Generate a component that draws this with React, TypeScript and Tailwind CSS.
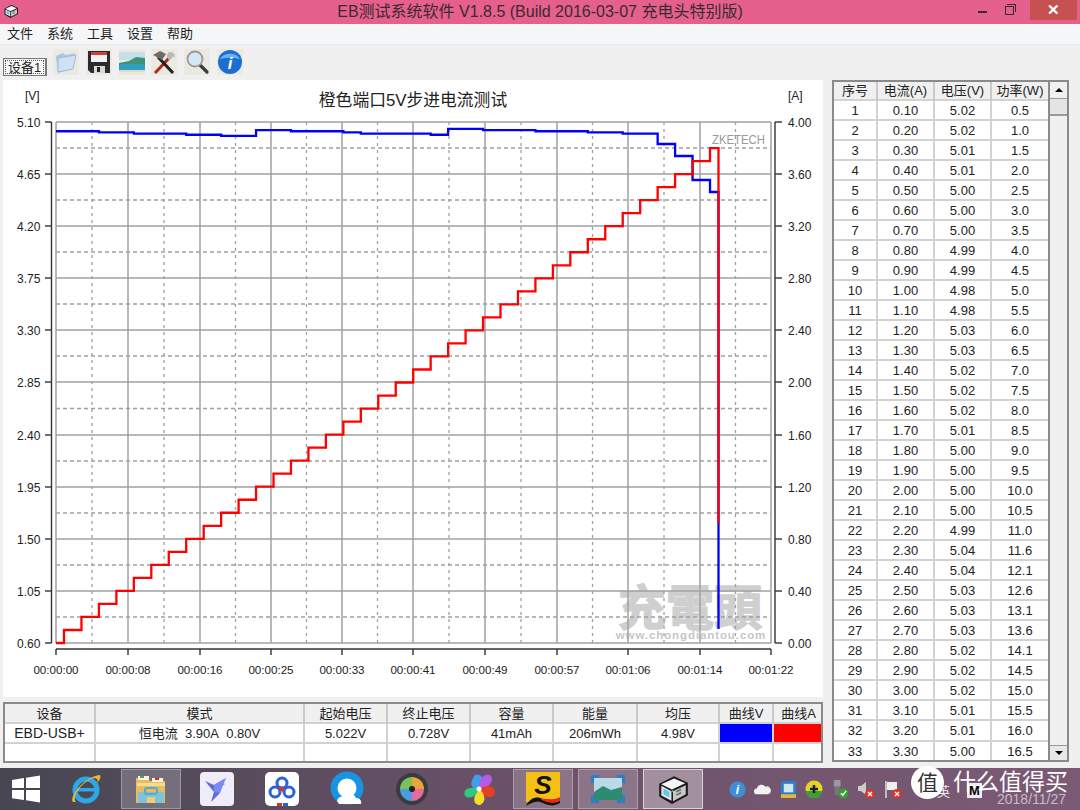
const menus = ["文件", "系统", "工具", "设置", "帮助"];

const volts = [5.02, 5.02, 5.01, 5.01, 5.0, 5.0, 5.0, 4.99, 4.99, 4.98, 4.98, 5.03, 5.03, 5.02, 5.02, 5.02, 5.01, 5.0, 5.0, 5.0, 5.0, 4.99, 5.04, 5.04, 5.03, 5.03, 5.03, 5.02, 5.02, 5.02, 5.01, 5.01, 5.0, 5.0];
const power = ["0.5", "1.0", "1.5", "2.0", "2.5", "3.0", "3.5", "4.0", "4.5", "5.0", "5.5", "6.0", "6.5", "7.0", "7.5", "8.0", "8.5", "9.0", "9.5", "10.0", "10.5", "11.0", "11.6", "12.1", "12.6", "13.1", "13.6", "14.1", "14.5", "15.0", "15.5", "16.0", "16.5"];

const gridX = [56, 128, 200, 271, 342, 413, 485, 557, 628, 700, 771];
const gridY = [122, 174, 226, 278, 330, 382, 435, 487, 539, 591, 643];
const timeLabels = ["00:00:00", "00:00:08", "00:00:16", "00:00:25", "00:00:33", "00:00:41", "00:00:49", "00:00:57", "00:01:06", "00:01:14", "00:01:22"];
const leftLabels = ["5.10", "4.65", "4.20", "3.75", "3.30", "2.85", "2.40", "1.95", "1.50", "1.05", "0.60"];
const rightLabels = ["4.00", "3.60", "3.20", "2.80", "2.40", "2.00", "1.60", "1.20", "0.80", "0.40", "0.00"];

const stepX = (i: number) => 64 + i * 17.46;

function redPoints() {
  const pts = ["56,643", "64,643"];
  for (let i = 0; i < 38; i++) {
    const y = 643 - (i + 1) * 13.025;
    pts.push(`${stepX(i)},${y}`, `${i === 37 ? 718.5 : stepX(i + 1)},${y}`);
  }
  pts.push("718.5,523");
  return pts.join(" ");
}

function bluePoints() {
  const ys = volts.map((v) => 122 + (5.1 - v) * 115.8).concat([144, 156, 180, 192]);
  const pts = [`56,${ys[0]}`];
  ys.forEach((y, i) => {
    pts.push(`${stepX(i)},${y}`, `${i === ys.length - 1 ? 718.5 : stepX(i + 1)},${y}`);
  });
  pts.push("718.5,629");
  return pts.join(" ");
}

function Chart() {
  return (
    <svg viewBox="3 80 820 617" className="w-[820px] h-[617px] block">
      {/* watermark sits under the grid */}
      <text x="690" y="625" textAnchor="middle" fontSize="48" fontWeight="700" fill="#cfcfcf" stroke="#cfcfcf" strokeWidth="1.5">充電頭</text>
      <text x="691" y="639" textAnchor="middle" fontSize="11.5" fontWeight="700" letterSpacing="0.9" fill="#c6c6c6">www.chongdiantou.com</text>

      <text x="413" y="106" textAnchor="middle" fontSize="16.8" fill="#222">橙色端口5V步进电流测试</text>
      <text x="25" y="100" fontSize="12" fill="#222">[V]</text>
      <text x="788" y="100" fontSize="12" fill="#222">[A]</text>

      {/* grid */}
      {gridX.map((x, i) => (
        <g key={x}>
          <line x1={x} y1="122" x2={x} y2="643" stroke="#a0a0a0" strokeWidth="1.5" />
          {i < 10 && <line x1={(x + gridX[i + 1]) / 2} y1="122" x2={(x + gridX[i + 1]) / 2} y2="643" stroke="#a0a0a0" strokeWidth="1.3" strokeDasharray="3 4" />}
        </g>
      ))}
      {gridY.map((y, i) => (
        <g key={y}>
          <line x1="56" y1={y} x2="771" y2={y} stroke="#a0a0a0" strokeWidth="1.5" />
          {i < 10 && <line x1="56" y1={(y + gridY[i + 1]) / 2} x2="771" y2={(y + gridY[i + 1]) / 2} stroke="#a0a0a0" strokeWidth="1.3" strokeDasharray="4 3" />}
        </g>
      ))}

      <text x="712" y="144" fontSize="12.5" textLength="53" lengthAdjust="spacingAndGlyphs" fill="#999">ZKETECH</text>

      {/* axes */}
      <path d="M51.5 122V643M775 122V643M56 649H771" stroke="#333" strokeWidth="1.4" fill="none" />
      {gridY.map((y, i) => (
        <g key={y}>
          <line x1="45" y1={y} x2="51.5" y2={y} stroke="#333" strokeWidth="1.4" />
          <line x1="775" y1={y} x2="782" y2={y} stroke="#333" strokeWidth="1.4" />
          <text x="17" y={y + 4.5} fontSize="12" fill="#222">{leftLabels[i]}</text>
          <text x="788" y={y + 4.5} fontSize="12" fill="#222">{rightLabels[i]}</text>
        </g>
      ))}
      {gridX.map((x, i) => (
        <g key={x}>
          <line x1={x} y1="649" x2={x} y2="655" stroke="#333" strokeWidth="1.4" />
          <text x={x} y="674" textAnchor="middle" fontSize="11.6" fill="#222">{timeLabels[i]}</text>
        </g>
      ))}

      {/* curves */}
      <polyline points={bluePoints()} fill="none" stroke="#0000ff" strokeWidth="2.3" />
      <polyline points={redPoints()} fill="none" stroke="#ff0000" strokeWidth="2.3" />
    </svg>
  );
}

function DataTable() {
  const th = "border-r-2 border-[#c9c9c9] bg-[#f0f0f0] font-normal last:border-r-0";
  const td = "border-r-2 border-t-2 border-[#d2d2d2] last:border-r-0";
  return (
    <div className="flex w-[237px] h-[682px] border-2 border-[#8a8a8a] bg-white overflow-hidden">
      <table className="w-[214px] table-fixed border-collapse text-[13px] leading-none text-center text-[#222] self-start">
        <colgroup>
          <col className="w-[43px]" />
          <col className="w-[57px]" />
          <col className="w-[57px]" />
          <col className="w-[57px]" />
        </colgroup>
        <thead>
          <tr className="h-[18px]">
            <th className={th}>序号</th>
            <th className={th}>电流(A)</th>
            <th className={th}>电压(V)</th>
            <th className={th}>功率(W)</th>
          </tr>
        </thead>
        <tbody>
          {power.map((p, i) => (
            <tr key={i} className="h-[20.03px]">
              <td className={td}>{i + 1}</td>
              <td className={td}>{((i + 1) / 10).toFixed(2)}</td>
              <td className={td}>{volts[i].toFixed(2)}</td>
              <td className={td}>{p}</td>
            </tr>
          ))}
        </tbody>
      </table>
      {/* scrollbar */}
      <div className="ml-auto w-[19px] flex flex-col bg-[#f0f0f0] border-l-2 border-[#8a8a8a]">
        <div className="h-[17px] flex items-center justify-center bg-[#f0f0f0] border-b border-[#999]">
          <div className="w-0 h-0 border-x-[4px] border-x-transparent border-b-[4px] border-b-black" />
        </div>
        <div className="h-[17px] bg-[#e4e4e4] border-b-2 border-[#9a9a9a]" />
        <div className="flex-1" />
        <div className="h-[15px] flex items-center justify-center bg-[#e8e8e8] border-t border-[#999]">
          <div className="w-0 h-0 border-x-[4px] border-x-transparent border-t-[4px] border-t-black" />
        </div>
      </div>
    </div>
  );
}

function SummaryTable() {
  const th = "border-r-2 border-[#c9c9c9] bg-[#f0f0f0] font-normal last:border-r-0";
  const td = "border-r-2 border-t-2 border-[#d2d2d2] last:border-r-0";
  return (
    <div className="w-[820px] h-[61px] border-2 border-[#8a8a8a] bg-white overflow-hidden">
      <table className="w-full table-fixed border-collapse text-[13px] leading-none text-center text-[#222]">
        <colgroup>
          <col className="w-[90px]" />
          <col className="w-[209px]" />
          <col className="w-[83px]" />
          <col className="w-[83px]" />
          <col className="w-[83px]" />
          <col className="w-[84px]" />
          <col className="w-[82px]" />
          <col className="w-[54px]" />
          <col className="w-[50px]" />
        </colgroup>
        <thead>
          <tr className="h-[19px]">
            <th className={th}>设备</th>
            <th className={th}>模式</th>
            <th className={th}>起始电压</th>
            <th className={th}>终止电压</th>
            <th className={th}>容量</th>
            <th className={th}>能量</th>
            <th className={th}>均压</th>
            <th className={th}>曲线V</th>
            <th className={th}>曲线A</th>
          </tr>
        </thead>
        <tbody>
          <tr className="h-[20px]">
            <td className={`${td} text-[14px]`}>EBD-USB+</td>
            <td className={td}>恒电流&nbsp; 3.90A&nbsp; 0.80V</td>
            <td className={td}>5.022V</td>
            <td className={td}>0.728V</td>
            <td className={td}>41mAh</td>
            <td className={td}>206mWh</td>
            <td className={td}>4.98V</td>
            <td className={`${td} bg-[#0000ff]`} />
            <td className={`${td} bg-[#ff0000]`} />
          </tr>
          <tr className="h-[19px]">
            {Array.from({ length: 9 }, (_, i) => <td key={i} className={td} />)}
          </tr>
        </tbody>
      </table>
    </div>
  );
}

function Cube({ size }: { size: number }) {
  return (
    <svg width={size} height={size} viewBox="0 0 32 32" className="block">
      <path d="M3 11L17 4L30 10V22L15 30L3 23Z" fill="#1c1c1c" />
      <path d="M5 11.5L17 6L27.5 10.5L15 16.5Z" fill="#f6f6f6" />
      <path d="M5 13L14.5 18V27L5 22Z" fill="#e4e4e4" />
      <path d="M7 15.5L12.5 18.5V24L7 21Z" fill="#5fc7e8" />
      <path d="M16 18L28 12.5V21L16 27.5Z" fill="#c9c9c9" />
      <rect x="19" y="17" width="5" height="1.5" fill="#6a6a6a" transform="rotate(-24 21 18)" />
      <rect x="19" y="20" width="5" height="1.5" fill="#6a6a6a" transform="rotate(-24 21 21)" />
      <circle cx="15.5" cy="18" r="1" fill="#46c24a" />
    </svg>
  );
}

function ToolIcon({ children }: { children: React.ReactNode }) {
  return (
    <svg width="26" height="26" viewBox="0 0 26 26" className="block bg-[#ebe9e0]">
      {children}
    </svg>
  );
}

function Toolbar() {
  return (
    <div className="h-[32px] flex items-start pl-[3px] pt-[4px] border-t border-[#ececec]">
      <div className="mt-[9px] h-[18px] w-[44px] p-px border border-[#777] border-r-2 bg-[#f7f7f7]">
        <div className="h-full flex items-center justify-center border border-dotted border-[#555] text-[13px] text-[#222] leading-none">设备1</div>
      </div>
      <div className="ml-[6px] flex gap-[6.8px]">
        <ToolIcon>
          <path d="M3 7L10 4L13 6L22 4L20 20L5 24Z" fill="#a9c9ea" />
          <path d="M5 9L23 6L20 20L5 23Z" fill="#cfe2f5" stroke="#8fb3d8" strokeWidth="0.8" />
        </ToolIcon>
        <ToolIcon>
          <path d="M2 2H24V24H5L2 21Z" fill="#2b2b2e" />
          <rect x="5" y="3" width="16" height="3" fill="#c9443f" />
          <rect x="5" y="6" width="16" height="7" fill="#f2f2f2" />
          <rect x="8" y="17" width="11" height="7" fill="#d8d8d8" />
          <rect x="11" y="18" width="3" height="5" fill="#222" />
        </ToolIcon>
        <ToolIcon>
          <rect x="0" y="3" width="26" height="8" fill="#c3e0e8" />
          <path d="M0 14L10 12L17 8L26 9V15H0Z" fill="#3f9478" />
          <rect x="0" y="15" width="26" height="6" fill="#2f9fc0" />
          <rect x="0" y="21" width="26" height="2" fill="#d9dcc8" />
        </ToolIcon>
        <ToolIcon>
          <path d="M4 24L20 7" stroke="#a32d1f" strokeWidth="3" />
          <path d="M22 24L7 8" stroke="#222" strokeWidth="3" />
          <path d="M2 6L9 2L15 5L11 11Z" fill="#6c6c6c" />
          <path d="M18 3A5 5 0 0 0 18 11L23 7L24 9A5 5 0 0 0 20 3Z" fill="#b9b9b9" />
        </ToolIcon>
        <ToolIcon>
          <path d="M16 16L23 23" stroke="#3c3c3c" strokeWidth="3.2" strokeLinecap="round" />
          <circle cx="11" cy="10" r="7.5" fill="#d4e8f6" stroke="#9a9a9a" strokeWidth="1.8" />
        </ToolIcon>
        <ToolIcon>
          <circle cx="13" cy="13" r="12" fill="#1c6fd0" />
          <path d="M3 10A11 9 0 0 1 23 10A20 9 0 0 0 3 10Z" fill="#6fb0ee" />
          <text x="13" y="20" textAnchor="middle" fontSize="17" fontWeight="700" fontStyle="italic" fill="#fff">i</text>
        </ToolIcon>
      </div>
    </div>
  );
}

function Tile({ look, children }: { look?: "active" | "bright"; children: React.ReactNode }) {
  const tone = look === "bright" ? "border-white/60 bg-white/35" : look === "active" ? "border-white/30 bg-white/20" : "border-transparent";
  return (
    <div className={`w-[60px] h-[40px] flex items-center justify-center border ${tone}`}>
      {children}
    </div>
  );
}

function TaskIcons() {
  return (
    <div className="-ml-[9px] flex items-center gap-[5.2px]">
      <Tile>
        <svg width="30" height="30" viewBox="0 0 30 30" className="ml-[10px]">
          <path d="M1 6L13 4V14H1ZM15 3.7L29 1.5V14H15ZM1 16H13V26L1 24.3ZM15 16H29V28.5L15 26.3Z" fill="#fff" />
        </svg>
      </Tile>
      <Tile>
        <svg width="34" height="34" viewBox="0 0 34 34">
          <circle cx="17" cy="18" r="11" fill="none" stroke="#2da7e6" strokeWidth="5" />
          <rect x="8" y="16" width="20" height="3.5" fill="#2da7e6" />
          <path d="M4 30C0 25 14 6 30 3C33 3 31 8 28 11C30 6 26 5 20 8C11 13 3 25 7 30Z" fill="#e8b92f" />
        </svg>
      </Tile>
      <Tile look="active">
        <svg width="34" height="34" viewBox="0 0 34 34">
          <path d="M2 6H14L16 9H31V31H2Z" fill="#e5bd5f" />
          <rect x="4" y="4" width="11" height="4" fill="#f8f3dc" />
          <rect x="18" y="6" width="11" height="4" fill="#f8f3dc" />
          <rect x="6" y="4" width="4" height="2" fill="#3fae4a" />
          <rect x="21" y="6" width="4" height="2" fill="#c9342c" />
          <path d="M3 11H31V14H3Z" fill="#f4dc94" />
          <rect x="4" y="20" width="26" height="11" rx="1" fill="#7ec3dc" />
          <rect x="11" y="16" width="12" height="6" rx="2" fill="none" stroke="#5aa9c9" strokeWidth="2" />
          <rect x="13" y="25" width="8" height="6" fill="#efcf6f" />
        </svg>
      </Tile>
      <Tile>
        <svg width="34" height="34" viewBox="0 0 34 34">
          <rect width="34" height="34" rx="4" fill="#eeedf8" />
          <path d="M5 9L14 13L26 6L22 11L25 12L21 14L20 21L11 30L14 20Z" fill="#5c6be0" />
          <path d="M14 13L26 6L20 21L14 20Z" fill="#7b8cf0" />
        </svg>
      </Tile>
      <Tile>
        <svg width="34" height="34" viewBox="0 0 34 34">
          <rect width="34" height="34" rx="5" fill="#fff" />
          <circle cx="17" cy="11" r="5" fill="none" stroke="#2b62d9" strokeWidth="3" />
          <circle cx="10" cy="20" r="5" fill="none" stroke="#2b62d9" strokeWidth="3" />
          <circle cx="24" cy="20" r="5" fill="none" stroke="#2b62d9" strokeWidth="3" />
          <path d="M14 15L19 19" stroke="#d9332b" strokeWidth="3" />
          <rect x="12" y="31" width="5" height="3" fill="#d9332b" />
          <rect x="18" y="31" width="5" height="3" fill="#2b62d9" />
        </svg>
      </Tile>
      <Tile>
        <svg width="36" height="36" viewBox="0 0 36 36">
          <circle cx="18" cy="17" r="13" fill="#fff" />
          <circle cx="18" cy="17" r="13" fill="none" stroke="#1a93e4" strokeWidth="7" />
          <path d="M8 30C10 24 15 26 17 23C21 20 26 24 27 27C31 27 33 30 32 33H10Z" fill="#fff" />
        </svg>
      </Tile>
      <Tile>
        <svg width="34" height="34" viewBox="0 0 34 34">
          <circle cx="17" cy="17" r="16" fill="#3b3b3f" />
          <path d="M17 5A12 12 0 0 1 29 17L17 17Z" fill="#e7a53a" />
          <path d="M29 17A12 12 0 0 1 17 29L17 17Z" fill="#e46aa0" />
          <path d="M17 29A12 12 0 0 1 5 17L17 17Z" fill="#4a9de0" />
          <path d="M5 17A12 12 0 0 1 17 5L17 17Z" fill="#79c255" />
          <circle cx="17" cy="17" r="3" fill="#222" />
        </svg>
      </Tile>
      <Tile>
        <svg width="34" height="34" viewBox="0 0 34 34" className="ml-[3px]">
          <path d="M17 17C10 17 6 13 13 3C20 1 24 8 17 17Z" fill="#3f9ee8" />
          <path d="M17 17C16 10 20 1 28 3C33 8 28 16 17 17Z" fill="#b45bea" />
          <path d="M17 17C24 12 33 13 33 21C30 28 22 26 17 17Z" fill="#e83f24" />
          <path d="M17 17C23 21 25 30 18 33C10 33 11 24 17 17Z" fill="#f5dd2a" />
          <path d="M17 17C15 24 7 28 3 24C0 16 9 14 17 17Z" fill="#2fc87d" />
          <circle cx="17" cy="17" r="2.5" fill="#fff" />
        </svg>
      </Tile>
      <Tile look="active">
        <svg width="34" height="34" viewBox="0 0 34 34">
          <rect width="34" height="30" fill="#f5bf14" />
          <text x="17" y="22" textAnchor="middle" fontSize="26" fontWeight="700" fontStyle="italic" fill="#111">S</text>
          <path d="M0 34C4 25 12 24 17 27C24 31 30 28 34 26V31C26 36 20 32 14 30C9 29 5 31 0 34Z" fill="#111" />
          <path d="M14 27C22 26 27 29 34 25V29C26 33 20 30 14 27Z" fill="#e22a1f" />
        </svg>
      </Tile>
      <Tile look="active">
        <svg width="34" height="28" viewBox="0 0 34 28">
          <rect x="3" y="3" width="28" height="22" fill="#b9dbe8" />
          <path d="M3 17L12 11L20 15L31 12V25H3Z" fill="#2f8a72" />
          <path d="M0 8V0H8V3H3V8ZM26 0H34V8H31V3H26ZM0 20H3V25H8V28H0ZM31 20H34V28H26V25H31Z" fill="#2d7fc4" />
        </svg>
      </Tile>
      <Tile look="bright">
        <Cube size={34} />
      </Tile>
    </div>
  );
}

function TrayIcons() {
  const badge = (
    <>
      <circle cx="13" cy="14" r="5" fill="#d7362b" />
      <path d="M11 12L15 16M15 12L11 16" stroke="#fff" strokeWidth="1.3" />
    </>
  );
  return (
    <div className="ml-[26px] flex items-center gap-[8.5px]">
      <svg width="17" height="17" viewBox="0 0 18 18">
        <circle cx="9" cy="9" r="8.5" fill="#3f8fd8" />
        <text x="9" y="14" textAnchor="middle" fontSize="13" fontWeight="700" fontStyle="italic" fill="#fff">i</text>
      </svg>
      <svg width="17" height="17" viewBox="0 0 18 18">
        <path d="M3 14A3 3 0 0 1 3 8A5 5 0 0 1 12 6A4 4 0 0 1 15 14Z" fill="#f2f2f2" />
      </svg>
      <svg width="17" height="17" viewBox="0 0 18 18">
        <rect x="1" y="0" width="16" height="18" fill="#2a7fd0" />
        <rect x="4" y="3" width="10" height="9" fill="#cfe8f5" />
        <rect x="1" y="14" width="16" height="4" fill="#e2b63a" />
      </svg>
      <svg width="18" height="18" viewBox="0 0 18 18">
        <circle cx="9" cy="9" r="8.5" fill="#e8d224" />
        <path d="M1 11A8 8 0 0 0 17 11Z" fill="#3f9e33" />
        <path d="M9 5V13M5 9H13" stroke="#123" strokeWidth="2.4" />
      </svg>
      <svg width="17" height="19" viewBox="0 0 18 20">
        <rect x="2" y="0" width="7" height="7" fill="#9a9a9a" />
        <rect x="3" y="7" width="5" height="9" fill="#777" />
        <circle cx="12" cy="14" r="5.5" fill="#3c9a3c" />
        <path d="M9.5 14L11.5 16L15 11.5" stroke="#fff" strokeWidth="1.4" fill="none" />
      </svg>
      <svg width="18" height="18" viewBox="0 0 18 18">
        <path d="M1 6H4L9 2V15L4 11H1Z" fill="#ccc" />
        {badge}
      </svg>
      <svg width="18" height="18" viewBox="0 0 18 18">
        <path d="M2 1V18" stroke="#ddd" strokeWidth="1.5" />
        <path d="M3 2H13V10H3Z" fill="#eee" />
        {badge}
      </svg>
    </div>
  );
}

function Taskbar() {
  return (
    <div className="relative h-[42px] flex items-center bg-gradient-to-r from-[#474653] via-[#6d5269] to-[#7b5a76]">
      <TaskIcons />
      <TrayIcons />
      {/* site watermark over the tray */}
      <span className="absolute left-[937px] top-[17px] text-[13px] leading-none text-[#eee]">英</span>
      <span className="absolute left-[967px] top-[15px] w-[15px] h-[15px] flex items-center justify-center bg-[#eee] text-[13px] font-bold leading-none text-black">M</span>
      <span className="absolute left-[997px] top-[24px] text-[14px] leading-none text-[#c9bcc8]">2018/11/27</span>
      <div className="absolute left-[911px] top-[-2px] w-[33px] h-[33px] rounded-full bg-white flex items-center justify-center text-[21px] leading-none text-[#333]">值</div>
      <span className="absolute left-[953px] top-[3px] text-[23px] leading-none text-white whitespace-nowrap">什么值得买</span>
    </div>
  );
}

export default function App() {
  return (
    <div className="w-[1080px] h-[810px] flex flex-col overflow-hidden bg-[#f0f0f0] [font-family:'Liberation_Sans','Noto_Sans_CJK_SC',sans-serif]">
      {/* title bar */}
      <div className="relative h-[24px] flex items-center justify-center bg-[#e5608c] text-[16px] text-[#3a2a30]">
        <div className="absolute left-[3px] top-[3px]"><Cube size={16} /></div>
        EB测试系统软件 V1.8.5 (Build 2016-03-07 充电头特别版)
        <div className="absolute right-[3px] top-0 flex items-center">
          <div className="w-[9px] h-[2px] bg-[#3a2a30] mr-[18px] mt-[3px]" />
          <div className="relative w-[9px] h-[9px] border border-[#3a2a30] mr-[16px] mt-[1px]">
            <div className="absolute -top-[3px] left-[1px] w-[9px] h-[8px] border-t border-r border-[#3a2a30]" />
          </div>
          <div className="w-[47px] h-[20px] bg-[#c75050] flex items-center justify-center text-white text-[15px] font-bold">✕</div>
        </div>
      </div>

      {/* menu */}
      <div className="h-[20px] flex items-center gap-[14px] pl-[7px] bg-[#f5f6f7] text-[13px] text-[#222]">
        {menus.map((m) => <span key={m}>{m}</span>)}
      </div>

      <Toolbar />

      {/* main area */}
      <div className="flex-1 flex pl-[3px] pt-[4px] gap-[9px] min-h-0">
        <div className="flex flex-col w-[820px]">
          <div className="bg-white h-[617px]">
            <Chart />
          </div>
          <div className="mt-[5px]">
            <SummaryTable />
          </div>
        </div>
        <DataTable />
      </div>

      <Taskbar />
    </div>
  );
}
